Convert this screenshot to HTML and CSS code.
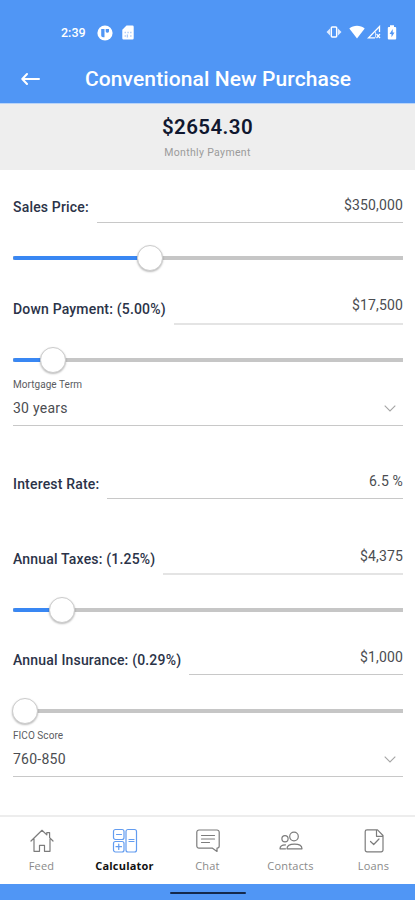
FILE: index.html
```html
<!DOCTYPE html>
<html lang="en">
<head>
<meta charset="utf-8">
<meta name="viewport" content="width=device-width">
<title>Conventional New Purchase</title>
<link rel="stylesheet" href="styles.css">
</head>
<body>
<div class="app">
  <header class="header">
    <div class="status">
      <span class="clock">2:39</span>
      <svg class="status-app" width="16" height="16" viewBox="0 0 16 16"><circle cx="8" cy="8" r="7.6" fill="#fff"/><path d="M4.2 4h3.3v8.2H6a1.8 1.8 0 0 1-1.8-1.8zM8.7 4H12v2.5a1.7 1.7 0 0 1-3.3 0z" fill="#5096f5"/></svg>
      <svg class="status-sim" width="12" height="15" viewBox="0 0 12 15"><path d="M4.5.5h6a1.2 1.2 0 0 1 1.2 1.2v11.6a1.2 1.2 0 0 1-1.2 1.2h-9A1.2 1.2 0 0 1 .3 13.3V4.7z" fill="#fff"/><path d="M2.6 7.5h1.3M5.4 7.5h1.3M8.2 7.5h1.3M2.6 11h1.3M5.4 9.5v3M8.2 11h1.3" stroke="#a9c9f8" stroke-width="1.3"/></svg>
      <span class="spacer"></span>
      <svg class="status-vibrate" width="16" height="14" viewBox="0 0 16 14"><rect x="5.3" y="2" width="5.4" height="10" rx="1" fill="none" stroke="#fff" stroke-width="1.5"/><path d="M4 3.5v7L.5 7zM12 3.5v7L15.5 7z" fill="#dceaff"/></svg>
      <svg class="status-wifi" width="16" height="14" viewBox="0 0 16 14"><path d="M.3 3.5C4.5-.3 11.5-.3 15.7 3.5L8 13.500z" fill="#fff"/></svg>
      <svg class="status-signal" width="14" height="14" viewBox="0 0 14 14"><path d="M12.5 7V1.500L1.500 12.800H8" fill="none" stroke="#fff" stroke-width="1.3"/><path d="M9.500 9l3.500 4M13 9l-3.500 4" stroke="#fff" stroke-width="1.2"/><path d="M8.500 7v5.500" stroke="#cfe1fc" stroke-width="1"/></svg>
      <svg class="status-battery" width="10" height="15" viewBox="0 0 10 15"><path d="M3 .3h4v1.600h1.200A1 1 0 0 1 9.200 3v10.500a1 1 0 0 1-1 1H1.800a1 1 0 0 1-1-1V3a1 1 0 0 1 1-1H3z" fill="#fff"/><path d="M5.700 4L2.600 9h1.900v3.300L7.500 7.500H5.700z" fill="#5096f5"/></svg>
    </div>
    <div class="titlebar">
      <svg class="back" width="20" height="14" viewBox="0 0 20 14" fill="none" stroke="#fff" stroke-width="2" stroke-linecap="round" stroke-linejoin="round"><path d="M18 7H1.500M6 2L1.300 7 6 12"/></svg>
      <h1>Conventional New Purchase</h1>
    </div>
  </header>

  <section class="summary">
    <div class="amount">$2654.30</div>
    <div class="caption">Monthly Payment</div>
  </section>

  <main class="form">
    <div class="field sales"><label>Sales Price:</label><div class="value">$350,000</div></div>
    <div class="slider"><div class="fill" style="width:137px"></div><div class="thumb"></div></div>

    <div class="field down soft"><label>Down Payment: (5.00%)</label><div class="value">$17,500</div></div>
    <div class="slider"><div class="fill" style="width:40px"></div><div class="thumb"></div></div>

    <div class="select term"><div class="select-label">Mortgage Term</div><div class="select-value"><span>30 years</span><svg width="12" height="7" viewBox="0 0 12 7"><path d="M.7.7L6 5.9 11.3.7" fill="none" stroke="#a5a5a5" stroke-width="1.1"/></svg></div></div>

    <div class="field rate"><label>Interest Rate:</label><div class="value">6.5 %</div></div>

    <div class="field taxes soft"><label>Annual Taxes: (1.25%)</label><div class="value">$4,375</div></div>
    <div class="slider"><div class="fill" style="width:49px"></div><div class="thumb"></div></div>

    <div class="field insurance"><label>Annual Insurance: (0.29%)</label><div class="value">$1,000</div></div>
    <div class="slider premium"><div class="fill empty" style="width:12px"></div><div class="thumb"></div></div>

    <div class="select fico"><div class="select-label">FICO Score</div><div class="select-value"><span>760-850</span><svg width="12" height="7" viewBox="0 0 12 7"><path d="M.7.7L6 5.9 11.3.7" fill="none" stroke="#a5a5a5" stroke-width="1.1"/></svg></div></div>
  </main>

  <nav class="tabs">
    <div class="tab feed">
      <svg width="26" height="26" viewBox="0 0 26 26"><path d="M2 13L13 2.300l4.800 4.600V4.600h2.800v5L24 13M5 11v12.300h5.500v-6h5v6H21V11"/></svg>
      <span>Feed</span>
    </div>
    <div class="tab calc active">
      <svg width="26" height="26" viewBox="0 0 26 26"><rect x="1.500" y="1.500" width="10.500" height="10" rx="2"/><rect x="1.500" y="13.500" width="10.500" height="10.500" rx="2"/><rect x="14" y="1.500" width="10.500" height="22.500" rx="2"/><path d="M4.500 6.500h5M4 18.700h5.500M6.750 16v5.500M17 11.500h5M17 13.500h5"/></svg>
      <span>Calculator</span>
    </div>
    <div class="tab chat">
      <svg width="26" height="26" viewBox="0 0 26 26"><path d="M4 2h18a2.200 2.200 0 0 1 2.200 2.200V18a2.200 2.200 0 0 1-2.200 2.200V23.500l-4.500-3.300H4A2.200 2.200 0 0 1 1.800 18V4.200A2.200 2.200 0 0 1 4 2zM6.500 7.500h13M6.500 11h13M6.500 14.500h8"/></svg>
      <span>Chat</span>
    </div>
    <div class="tab contacts">
      <svg width="26" height="26" viewBox="0 0 26 26"><circle cx="16" cy="8.500" r="4.300"/><circle cx="7" cy="10.800" r="3.100"/><path d="M9 20.800c0-3.700 3-4.600 7.500-4.600s7.500.9 7.500 4.600zM7.500 20.800H2c0-3 1.500-4 5.500-4"/></svg>
      <span>Contacts</span>
    </div>
    <div class="tab loans">
      <svg width="26" height="26" viewBox="0 0 26 26"><path d="M6 1.800h10.500l5.500 5.700V22a1.800 1.800 0 0 1-1.800 1.800H6A1.800 1.800 0 0 1 4.200 22V3.600A1.800 1.800 0 0 1 6 1.800zM15.500 1.800v6.500H22M9.500 13.500l3.200 3 5.300-5.500"/></svg>
      <span>Loans</span>
    </div>
  </nav>
  <footer class="system"><div class="handle"></div></footer>
</div>
</body>
</html>
```
FILE: styles.css
```css
* { box-sizing: border-box; }
body { margin: 0; background: #fff; font-family: Roboto, sans-serif; color: #4b4d51; }
.app { width: 415px; height: 900px; display: flex; flex-direction: column; overflow: hidden; }
svg { display: block; flex: none; }

.header { height: 104px; background: #5096f5; flex: none; border-bottom: 1px solid #b9d4f8; }
.status { height: 56px; padding: 25px 18px 0 61px; display: flex; align-items: flex-start; color: #fff; }
.clock { font-size: 12.5px; line-height: 16px; font-weight: 500; width: 36px; }
.status-sim { margin-left: 9px; }
.spacer { flex: 1; }
.status-wifi { margin-left: 7px; }
.status-signal { margin-left: 2px; }
.status-battery { margin-left: 6px; }
.titlebar { height: 47px; display: flex; align-items: center; padding: 0 0 1px 21px; }
h1 { margin: 0 0 0 44px; color: #fff; font-size: 21px; line-height: 26px; font-weight: 500; white-space: nowrap; letter-spacing: .1px; }

.summary { height: 66px; flex: none; background: #eee; text-align: center; padding-top: 10px; }
.amount { font-size: 20.5px; line-height: 26px; font-weight: 600; color: #10172f; letter-spacing: .4px; }
.caption { font-size: 10.5px; line-height: 14px; margin-top: 6px; color: #9b9b9b; letter-spacing: .33px; }

.form { height: 645px; flex: none; padding: 0 12px 0 13px; }
.field { display: flex; align-items: flex-end; height: 30px; font-size: 14px; white-space: nowrap; }
.field label { font-weight: 500; color: #2b3348; line-height: 18px; padding-bottom: 6px; letter-spacing: .18px; }
.field .value { flex: 1; height: 100%; margin-left: 8px; text-align: right; line-height: 18px; padding-top: 3px; border-bottom: 1px solid #c8c8c8; letter-spacing: .15px; }
.soft label { padding-bottom: 7px; }
.soft .value { border-bottom: 2px solid #e4e4e4; }
.sales { margin-top: 23px; }
.sales label { padding-bottom: 7px; }
.down { margin-top: 22px; height: 32px; }
.rate { margin-top: 43px; }
.taxes { margin-top: 45px; height: 31px; }
.insurance { margin-top: 22px; }

.slider { height: 26px; margin-top: 22px; display: flex; align-items: center; background: linear-gradient(#c6c6c6, #c6c6c6) center / 100% 4px no-repeat; }
.premium { margin-top: 23px; }
.fill { height: 4px; background: #3987f3; border-radius: 2px 0 0 2px; flex: none; }
.empty { background: none; }
.thumb { width: 26px; height: 26px; margin-left: -13px; border-radius: 50%; background: #fff; border: 1px solid #ccc; box-shadow: 0 1px 2px #0004; flex: none; }

.select { height: 53px; border-bottom: 1px solid #c8c8c8; }
.select-label { font-size: 10px; line-height: 14px; padding-top: 5px; letter-spacing: .05px; color: #5a5c61; }
.select-value { display: flex; justify-content: space-between; align-items: center; padding-right: 7px; font-size: 14px; line-height: 18px; margin-top: 7px; letter-spacing: .25px; }

.tabs { height: 69px; flex: none; border-top: 2px solid #ededed; display: flex; font-family: "Open Sans", sans-serif; }
.tab { flex: 1; display: flex; flex-direction: column; align-items: center; padding-top: 11px; font-size: 11px; line-height: 16px; color: #8a8a8a; letter-spacing: .2px; }
.tab span { margin-top: 4px; }
.tab svg { fill: none; stroke: #7c7c7c; stroke-width: 1.2; stroke-linejoin: round; stroke-linecap: round; }
.tab.active { color: #111; font-weight: 700; }
.tab.active svg { stroke: #629cf0; }
.system { height: 16px; flex: none; background: #5096f5; padding-top: 8px; }
.handle { width: 76px; height: 2px; margin: 0 auto; border-radius: 1px; background: #14294c; }
```
